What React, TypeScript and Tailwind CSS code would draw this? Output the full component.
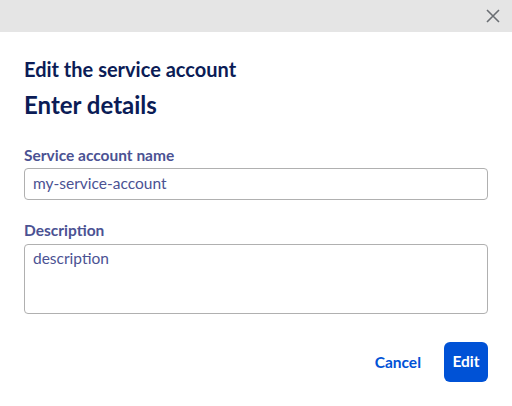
import React from "react";

export default function App() {
  return (
    <div className="w-[512px] h-[406px] bg-white flex flex-col" style={{ fontFamily: "Lato, 'Noto Sans', sans-serif" }}>
      <div className="h-[32px] bg-[#e5e5e5] flex items-center justify-end pr-[12px] shrink-0">
        <svg width="14" height="14" viewBox="0 0 14 14" className="text-[#6a6e73]">
          <path d="M1 1L13 13M13 1L1 13" stroke="currentColor" strokeWidth="1.6" fill="none" />
        </svg>
      </div>
      <div className="flex flex-col px-[24px] pt-[25px]">
        <div className="text-[20px] font-bold text-[#0b1c56] leading-[24px]">Edit the service account</div>
        <div className="text-[24px] font-bold text-[#0b1c56] leading-[30px] mt-[9px]">Enter details</div>
        <div className="mt-[25px] text-[15.5px] font-bold text-[#4b5293] leading-[20px]">Service account name</div>
        <div className="mt-[3px] h-[32px] border border-[#b0b0b0] rounded-[4px] flex items-center px-[8px] text-[15.5px] text-[#4b5293]">
          my-service-account
        </div>
        <div className="mt-[20px] text-[15.5px] font-bold text-[#4b5293] leading-[20px]">Description</div>
        <div className="mt-[4px] h-[70px] border border-[#b0b0b0] rounded-[4px] px-[8px] pt-[2px] text-[15.5px] text-[#4b5293]">
          description
        </div>
        <div className="flex justify-end items-center mt-[28px] gap-[23px]">
          <span className="text-[15.5px] font-bold text-[#0052d6] pt-[1px]">Cancel</span>
          <div className="w-[44px] h-[40px] rounded-[6px] bg-[#0052d6] text-white font-bold text-[15.5px] flex items-center justify-center">Edit</div>
        </div>
      </div>
    </div>
  );
}
